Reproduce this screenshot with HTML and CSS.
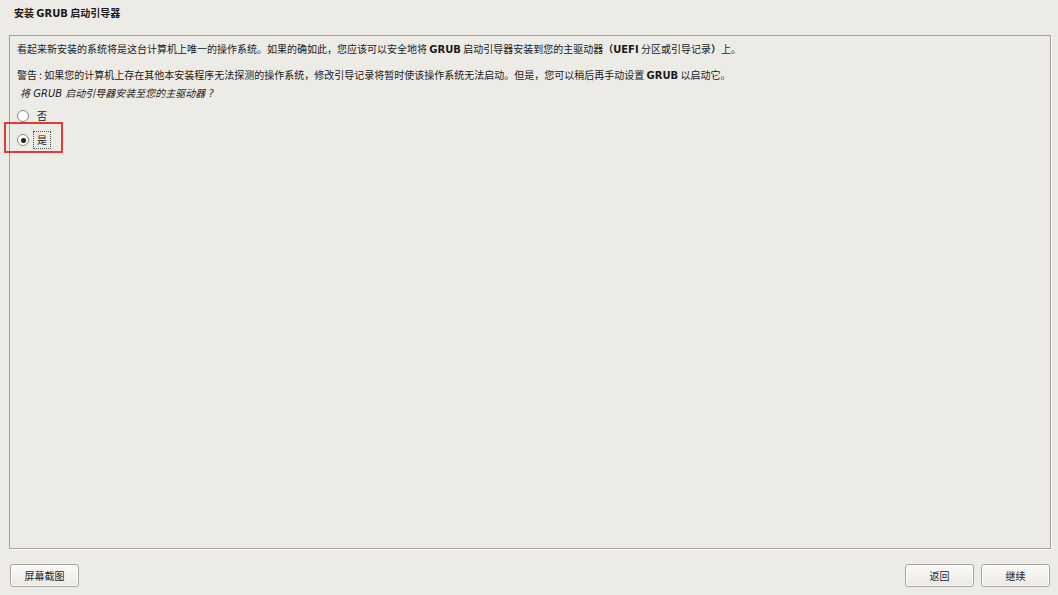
FILE: index.html
```html
<!DOCTYPE html>
<html lang="zh-CN">
<head>
<meta charset="utf-8">
<title>安装 GRUB 启动引导器</title>
<link rel="stylesheet" href="styles.css">
</head>
<body>
<div class="window">
  <header class="title">安装 <b class="latin">GRUB</b> 启动引导器</header>
  <main class="panel">
    <p class="line first">看起来新安装的系统将是这台计算机上唯一的操作系统。如果的确如此，您应该可以安全地将 <b class="latin">GRUB</b> 启动引导器安装到您的主驱动器<b>（UEFI</b> 分区或引导记录<b>）</b>上。</p>
    <p class="line second">警告 : 如果您的计算机上存在其他本安装程序无法探测的操作系统，修改引导记录将暂时使该操作系统无法启动。但是，您可以稍后再手动设置 <b class="latin">GRUB</b> 以启动它。</p>
    <p class="line question"><i>将 GRUB 启动引导器安装至您的主驱动器 ?</i></p>
    <div class="options">
      <label class="option"><span class="radio"></span><span class="opt-text">否</span></label>
      <label class="option"><span class="radio checked"></span><span class="opt-text focus">是</span></label>
      <div class="highlight"></div>
    </div>
  </main>
  <footer class="buttons">
    <button class="btn">屏幕截图</button>
    <div class="spacer"></div>
    <button class="btn">返回</button>
    <button class="btn">继续</button>
  </footer>
</div>
</body>
</html>
```
FILE: styles.css
```css
html, body {
  margin: 0;
  padding: 0;
  background: #edebe6;
}
body {
  width: 1058px;
  height: 595px;
  overflow: hidden;
  font-family: "Noto Sans CJK SC", "DejaVu Sans", sans-serif;
  font-size: 10px;
  color: #1a1a1a;
}
.window {
  display: flex;
  flex-direction: column;
  height: 595px;
}
.title {
  font-weight: bold;
  font-size: 10px;
  line-height: 14px;
  padding: 6px 14px 15px 14px;
  height: 14px;
}
.latin {
  font-family: "DejaVu Sans", sans-serif;
  font-weight: bold;
}
.panel {
  margin: 0 7px 0 9px;
  height: 514px;
  border: 1px solid #a5a29b;
  box-shadow: 1px 1px 0 #ffffff;
  padding: 6px 7px 0 7px;
  position: relative;
  box-sizing: border-box;
}
.line {
  margin: 0;
  line-height: 14px;
  white-space: nowrap;
}
.line b {
  font-family: "DejaVu Sans", "Noto Sans CJK SC", sans-serif;
}
.second {
  margin-top: 11px;
}
.question {
  margin-top: 3px;
  padding-left: 3px;
}
.question i {
  font-style: italic;
  font-family: "DejaVu Sans", "Noto Sans CJK SC", sans-serif;
}
.options {
  margin-top: 7px;
  position: relative;
}
.option {
  display: flex;
  align-items: center;
  height: 16px;
  margin-bottom: 8px;
}
.radio {
  width: 10px;
  height: 10px;
  border: 1px solid #8a8780;
  border-radius: 50%;
  background: #ffffff;
  margin-left: 0;
  margin-right: 6px;
  position: relative;
  box-sizing: content-box;
}
.radio.checked::after {
  content: "";
  position: absolute;
  left: 2.5px;
  top: 2.5px;
  width: 5px;
  height: 5px;
  border-radius: 50%;
  background: #222;
}
.opt-text {
  padding: 0 2px;
  line-height: 14px;
}
.opt-text.focus {
  outline: 1px dotted #555;
  outline-offset: 1px;
}
.highlight {
  position: absolute;
  left: -13px;
  top: 14px;
  width: 55px;
  height: 27px;
  border: 2px solid #e2383a;
}
.buttons {
  display: flex;
  align-items: flex-start;
  padding: 15px 8px 0 10px;
  gap: 7px;
}
.spacer {
  flex: 1;
}
.btn {
  width: 69px;
  height: 23px;
  font-family: "Noto Sans CJK SC", sans-serif;
  font-size: 10px;
  color: #222;
  border: 1px solid #a9a69f;
  border-radius: 3px;
  background: linear-gradient(#fbfaf8, #ebe9e4);
  box-shadow: inset 0 0 0 1px #ffffff;
  padding: 0;
}
```
